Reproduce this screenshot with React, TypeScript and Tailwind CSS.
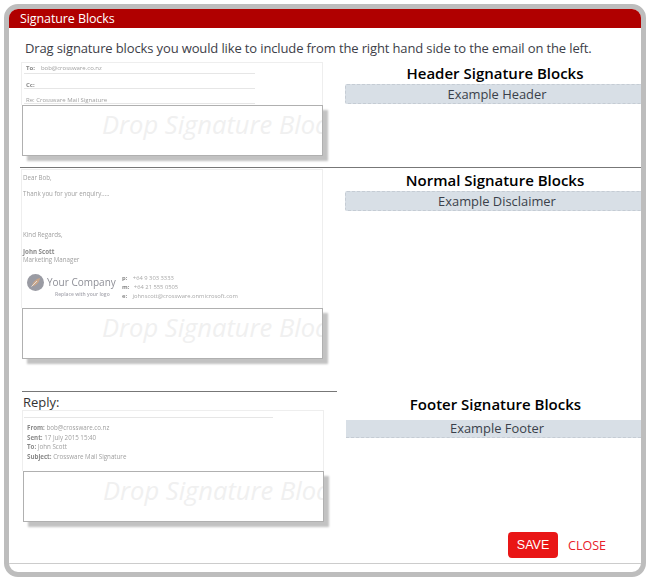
import React from 'react';

const DropZone: React.FC = () => (
  <div className="h-[51px] w-[301px] overflow-hidden border border-[#b0b0b0] bg-white pl-[79px] shadow-[5px_5px_2px_#c2c2c2]">
    <span className="block whitespace-nowrap text-[25.5px] italic leading-[36px] text-[#f0f0f0]">Drop Signature Blocks</span>
  </div>
);

const Chip: React.FC<{ label: string }> = ({ label }) => (
  <div className="h-[20px] rounded-l-[2px] border border-dashed border-r-0 border-[#c5ccd4] bg-[#d8dfe6] pl-[7px] text-center text-[12.9px] leading-[19px] text-[#3a3f4a]">
    {label}
  </div>
);

const Heading: React.FC<{ label: string }> = ({ label }) => (
  <div className="h-[21px] pl-[4px] text-center text-[15px] font-semibold leading-[20px] text-black">{label}</div>
);

const HeaderLine: React.FC<{ label?: string; value?: string; first?: boolean }> = ({ label, value, first }) => (
  <div className={first ? 'ml-[2px] h-[11px] w-[231px] border-b border-[#e6e6e6] pl-[2px] text-[6px] leading-[10px] text-[#a0a0a0]' : 'ml-[2px] h-[15px] w-[231px] border-b border-[#e6e6e6] pl-[2px] pt-[1px] text-[6px] leading-[20px] text-[#a0a0a0]'}>
    {label && <b className="mr-[6px] text-[#888]">{label}</b>}
    {value}
  </div>
);

const CompanyLogo: React.FC = () => (
  <svg width="17" height="17" viewBox="0 0 17 17">
    <circle cx="8.5" cy="8.5" r="8.5" fill="#9a9ba3" />
    <path d="M4.5 12.5C6 8 8.5 5 13 4c-.5 4.5-3.5 7.5-8.5 8.5z" fill="#c9a68a" />
    <path d="M4.5 12.5L10 7" stroke="#eeeeee" strokeWidth="0.8" />
  </svg>
);

export default function App() {
  return (
    <div className="h-[578px] w-[648px] bg-white pl-[4px] pt-[4px] font-['Open_Sans',sans-serif]">
      <div className="flex h-[573px] w-[642px] flex-col overflow-hidden rounded-[14px] border-[5px] border-[#bdbdbd] bg-white">
        <div className="h-[19px] shrink-0 bg-[#b00000] pl-[11px] text-[12.5px] leading-[19px] tracking-[-0.1px] text-white">Signature Blocks</div>
        <div className="h-[34px] shrink-0 pl-[16px] pt-[10px] text-[13px] leading-[20px] tracking-[-0.13px] text-[#3d4048]">
          Drag signature blocks you would like to include from the right hand side to the email on the left.
        </div>

        {/* header row */}
        <div className="flex h-[105px] shrink-0">
          <div className="ml-[12px] w-[302px]">
            <div className="h-[43px] w-[302px] border border-b-0 border-[#eeeeee] blur-[0.3px]">
              <HeaderLine first label="To:" value="bob@crossware.co.nz" />
              <HeaderLine label="Cc:" />
              <HeaderLine value="Re: Crossware Mail Signature" />
            </div>
            <div className="ml-px">
              <DropZone />
            </div>
          </div>
          <div className="ml-[22px] flex-1 pt-px">
            <Heading label="Header Signature Blocks" />
            <Chip label="Example Header" />
          </div>
        </div>

        <div className="ml-[11px] h-px shrink-0 bg-[#777777]" />

        {/* normal row */}
        <div className="flex h-[223px] shrink-0">
          <div className="ml-[12px] w-[302px] pt-px">
            <div className="h-[139px] w-[302px] border border-b-0 border-[#eeeeee] pl-px pt-[3px] text-[6.2px] text-[#a0a0a0]">
              <div className="blur-[0.3px]">
                <div className="leading-[10px]">Dear Bob,</div>
                <div className="mt-[6px] leading-[10px]">Thank you for your enquiry.....</div>
                <div className="mt-[31px] leading-[10px]">Kind Regards,</div>
                <div className="mt-[8px] font-bold leading-[8px] text-[#888]">John Scott</div>
                <div className="leading-[8px]">Marketing Manager</div>
                <div className="mt-[10px] flex">
                  <div className="ml-[4px] w-[95px]">
                    <div className="flex items-center gap-[3px]">
                      <CompanyLogo />
                      <span className="text-[10px] leading-[17px] text-[#8d8e96]">Your Company</span>
                    </div>
                    <div className="ml-[28px] text-[5px] font-semibold leading-[7px] text-[#a8a8b0]">Replace with your logo</div>
                  </div>
                  <div className="text-[5.8px] leading-[9px] text-[#a8a8a8]">
                    <div><b className="mr-[4px] text-[#888]">p:</b> +64 9 303 3333</div>
                    <div><b className="mr-[3px] text-[#888]">m:</b> +64 21 555 0505</div>
                    <div><b className="mr-[4px] text-[#888]">e:</b> johnscott@crossware.onmicrosoft.com</div>
                  </div>
                </div>
              </div>
            </div>
            <div className="ml-px">
              <DropZone />
            </div>
          </div>
          <div className="ml-[22px] flex-1 pt-[2px]">
            <Heading label="Normal Signature Blocks" />
            <Chip label="Example Disclaimer" />
          </div>
        </div>

        {/* reply row */}
        <div className="flex min-h-0 flex-1">
          <div className="ml-[13px] w-[315px]">
            <div className="h-px bg-[#777777]" />
            <div className="h-[18px] pl-px text-[13px] leading-[20px] text-[#333333]">Reply:</div>
            <div className="h-[61px] w-[302px] border border-b-0 border-[#eeeeee] pt-[6px] blur-[0.3px]">
              <div className="ml-px mr-[50px] border-t border-[#e6e6e6] pl-[3px] pt-[5px] text-[6.2px] leading-[9.5px] text-[#a0a0a0]">
                <div><b className="text-[#888]">From:</b> bob@crossware.co.nz</div>
                <div><b className="text-[#888]">Sent:</b> 17 July 2015 15:40</div>
                <div><b className="text-[#888]">To:</b> John Scott</div>
                <div><b className="text-[#888]">Subject:</b> Crossware Mail Signature</div>
              </div>
            </div>
            <div className="ml-px">
              <DropZone />
            </div>
          </div>
          <div className="ml-[9px] flex-1 pt-[3px]">
            <div className="h-[17px] overflow-hidden">
              <Heading label="Footer Signature Blocks" />
            </div>
            <div className="mt-[9px] h-[18px] overflow-hidden border-b border-dashed border-[#c5ccd4] bg-[#d8dfe6] pl-[7px] text-center text-[12.9px] leading-[17px] text-[#3a3f4a]">
              Example Footer
            </div>
          </div>
        </div>

        <div className="flex h-[31px] shrink-0 items-start justify-end pr-[35px]">
          <button className="h-[26px] w-[50px] rounded-[4px] bg-[#e91616] font-['Liberation_Sans',sans-serif] text-[12.5px] leading-[25px] text-white">SAVE</button>
          <span className="ml-[10px] mt-[6px] text-[12.5px] leading-[16px] text-[#e8202a]">CLOSE</span>
        </div>
        <div className="h-[9px] shrink-0 border-t border-[#cccccc]" />
      </div>
    </div>
  );
}
